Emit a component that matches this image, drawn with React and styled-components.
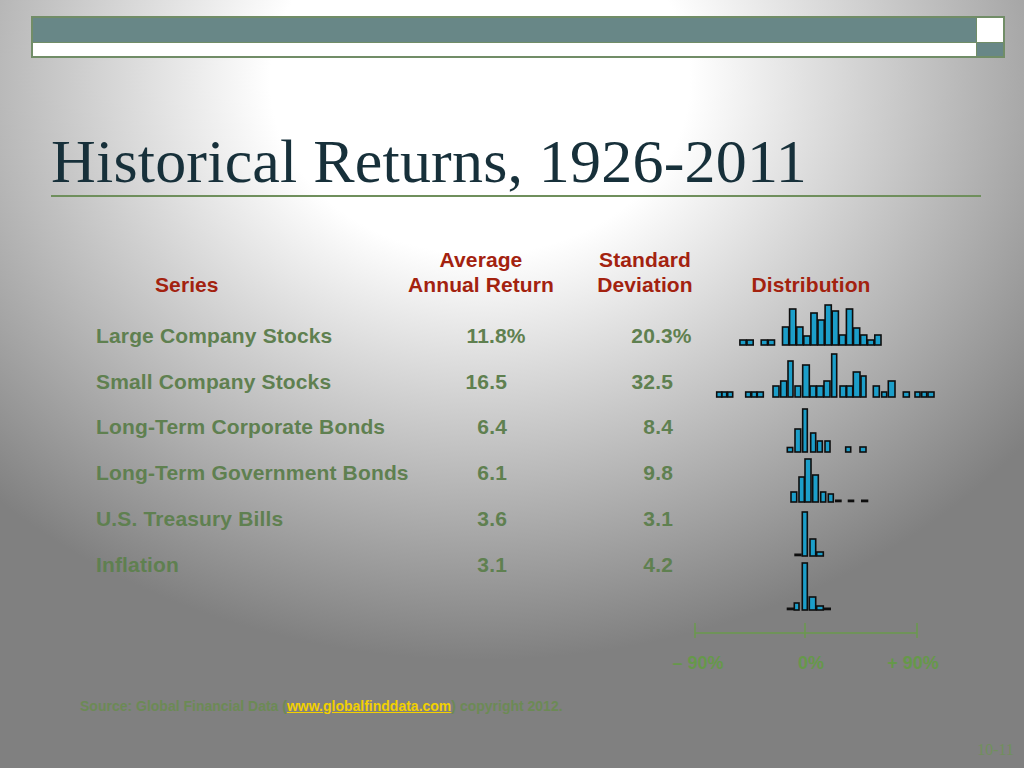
import React from 'react'
import styled, { createGlobalStyle } from 'styled-components'

const GlobalStyle = createGlobalStyle`
  html, body {
    margin: 0;
    padding: 0;
  }
  body {
    background: #808080;
  }
`;

const Slide = styled.div`
  width: 1024px;
  height: 768px;
  overflow: hidden;
  box-sizing: border-box;
  padding-top: 16px;
  background: radial-gradient(ellipse 700px 580px at 480px 80px, #ffffff 0%, #ffffff 30%, #808080 100%);
  font-family: "Liberation Sans", Arial, sans-serif;
`;

const TopBar = styled.div`
  margin-left: 31px;
  width: 974px;
  height: 42px;
  box-sizing: border-box;
  display: grid;
  grid-template-columns: 1fr 26px;
  grid-template-rows: 24px 1fr;
  gap: 1px;
  padding: 1px;
  border: 1px solid #718d67;
  background: #718d67;
`;

const BarCell = styled.div`
  background: ${p => (p.$teal ? '#688787' : '#ffffff')};
`;

const Title = styled.h1`
  margin: 72px 0 0 51px;
  width: 930px;
  padding: 0 0 3px 0;
  font-family: "Liberation Serif", "Times New Roman", serif;
  font-weight: 400;
  font-size: 62px;
  line-height: 62px;
  letter-spacing: 0.2px;
  color: #17303a;
  border-bottom: 2px solid #6f8f5c;
  white-space: nowrap;
`;

const Content = styled.div`
  display: flex;
  margin-top: 50px;
  padding-left: 96px;
  height: 433px;
`;

const Table = styled.div`
  display: grid;
  grid-template-columns: 276px 146px 110px;
  column-gap: 36px;
  row-gap: 20.8px;
  align-content: start;
`;

const HeadCell = styled.div`
  height: 55px;
  box-sizing: border-box;
  padding-top: ${p => (p.$low ? '25px' : '0')};
  padding-left: ${p => p.$indent || 0}px;
  text-align: ${p => p.$align || 'center'};
  font-weight: 700;
  font-size: 21px;
  line-height: 25px;
  letter-spacing: 0.1px;
  color: #a3220f;
  white-space: nowrap;
`;

const Cell = styled.div`
  font-weight: 700;
  font-size: 21px;
  line-height: 25px;
  letter-spacing: 0.15px;
  color: #5f8050;
  white-space: nowrap;
  text-align: ${p => (p.$num ? 'right' : 'left')};
  padding-right: ${p => p.$pad || 0}px;
`;

const Pct = styled.span`
  margin-right: -0.889em;
`;

const DistColumn = styled.div`
  display: flex;
  flex-direction: column;
  width: 222px;
`;

const DistChart = styled.svg`
  display: block;
  overflow: visible;
`;

const Source = styled.div`
  margin-top: 18px;
  padding-left: 80px;
  font-weight: 700;
  font-size: 14px;
  line-height: 16px;
  color: #6c8a55;
  white-space: nowrap;
`;

const SourceLink = styled.span`
  color: #f2d000;
  text-decoration: underline;
`;

const PageNum = styled.div`
  margin-top: 28px;
  padding-right: 10px;
  text-align: right;
  font-family: "Liberation Serif", "Times New Roman", serif;
  font-size: 16px;
  line-height: 16px;
  color: #70905c;
`;

const rows = [
  { name: 'Large Company Stocks', avg: '11.8', sd: '20.3', pct: true },
  { name: 'Small Company Stocks', avg: '16.5', sd: '32.5' },
  { name: 'Long-Term Corporate Bonds', avg: '6.4', sd: '8.4' },
  { name: 'Long-Term Government Bonds', avg: '6.1', sd: '9.8' },
  { name: 'U.S. Treasury Bills', avg: '3.6', sd: '3.1' },
  { name: 'Inflation', avg: '3.1', sd: '4.2' },
];

// large company bins: start 739.5, step 7.1
const largeHeights = [5, 5, 0, 5, 5, 0, 18, 36, 18, 9, 32, 25, 40, 34, 10, 36, 17, 10, 5, 10];
const largeBars = largeHeights
  .map((h, k) => [739.5 + k * 7.1 + 0.4, 739.5 + k * 7.1 + 6.6, h])
  .filter(b => b[2] > 0);

// [x1, x2, height]; height 0 = flat dash
const histograms = [
  { base: 345, bars: largeBars },
  {
    base: 397,
    bars: [
      [716.7, 721.7, 5], [722, 726.7, 5], [727.7, 732.7, 5],
      [745.7, 750.7, 5], [751.7, 756.7, 5], [757.3, 763.3, 5],
      [773, 779, 11], [780.7, 786.7, 16], [788, 793, 36], [795, 800.7, 11],
      [802.7, 809.3, 32], [810, 816, 11], [816.7, 823.3, 11], [824, 830, 16],
      [831.7, 836.7, 43], [840, 846, 11], [846.7, 852.7, 11], [853.3, 860, 25],
      [861, 866, 21], [873.3, 879.3, 11], [881.7, 886.7, 5], [888.3, 895, 16],
      [903.3, 909.3, 5], [915, 920, 5], [921.7, 926.7, 5], [928, 934, 5],
    ],
  },
  {
    base: 452,
    bars: [
      [787.3, 792.7, 4.5], [795, 800.7, 23], [802.7, 807.3, 43], [810.7, 815.7, 19],
      [817.3, 822.3, 11], [825, 830, 11], [845.7, 850.7, 5], [860, 866, 5],
    ],
  },
  {
    base: 502,
    bars: [
      [791, 796.7, 10], [799, 804.3, 25], [805, 811, 43], [812.7, 818.3, 27],
      [820.7, 825.7, 10], [828.3, 833.3, 8],
      [835, 841.7, 0], [847.7, 854.3, 0], [861, 868.3, 0],
    ],
  },
  {
    base: 556,
    bars: [[794.3, 801.7, 0], [802.3, 807.3, 44], [810, 815.7, 17], [816.7, 823.3, 4]],
  },
  {
    base: 610,
    bars: [
      [786.7, 794, 0], [794.3, 799, 7], [802.3, 807.3, 47], [809.3, 815.7, 13],
      [816.7, 823.3, 4], [824, 831, 0],
    ],
  },
];

const Distribution = () => (
  <DistChart width="245" height="378" viewBox="700 302 245 378">
    {histograms.map((hist, i) => (
      <g key={i}>
        {hist.bars.map(([x1, x2, h], j) =>
          h > 0 ? (
            <rect
              key={j}
              x={x1}
              y={hist.base - h}
              width={x2 - x1}
              height={h}
              fill="#1c9ec9"
              stroke="#0e0e0e"
              strokeWidth="1.6"
            />
          ) : (
            <rect key={j} x={x1} y={hist.base - 2.5} width={x2 - x1} height="2.8" fill="#0e0e0e" />
          )
        )}
      </g>
    ))}
    <g stroke="#6a9a4c" strokeWidth="1.5">
      <line x1="695" y1="633" x2="917" y2="633" />
      <line x1="695" y1="623" x2="695" y2="638" />
      <line x1="805" y1="623" x2="805" y2="638" />
      <line x1="917" y1="623" x2="917" y2="638" />
    </g>
    <g
      fill="#66984a"
      fontFamily="Liberation Sans, Arial, sans-serif"
      fontWeight="700"
      fontSize="18"
      textAnchor="middle"
    >
      <text x="698" y="669">– 90%</text>
      <text x="811" y="669">0%</text>
      <text x="913" y="669">+ 90%</text>
    </g>
  </DistChart>
);

const App = () => (
  <>
    <GlobalStyle />
    <Slide>
      <TopBar>
        <BarCell $teal />
        <BarCell />
        <BarCell />
        <BarCell $teal />
      </TopBar>

      <Title>Historical Returns, 1926-2011</Title>

      <Content>
        <Table>
          <HeadCell $low $align="left" $indent={59}>Series</HeadCell>
          <HeadCell>Average<br />Annual Return</HeadCell>
          <HeadCell>Standard<br />Deviation</HeadCell>
          {rows.map(r => (
            <React.Fragment key={r.name}>
              <Cell>{r.name}</Cell>
              <Cell $num $pad={47}>
                {r.avg}
                {r.pct && <Pct>%</Pct>}
              </Cell>
              <Cell $num $pad={27}>
                {r.sd}
                {r.pct && <Pct>%</Pct>}
              </Cell>
            </React.Fragment>
          ))}
        </Table>
        <DistColumn>
          <HeadCell $low>Distribution</HeadCell>
          <Distribution />
        </DistColumn>
      </Content>

      <Source>
        Source: Global Financial Data (<SourceLink>www.globalfinddata.com</SourceLink>) copyright 2012.
      </Source>
      <PageNum>10-11</PageNum>
    </Slide>
  </>
);

export default App;
